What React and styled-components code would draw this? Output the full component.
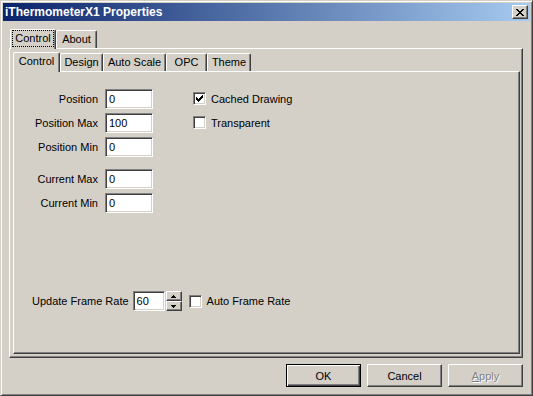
import React from 'react'
import styled, { createGlobalStyle } from 'styled-components'

const GlobalStyle = createGlobalStyle`
  html, body {
    margin: 0;
    padding: 0;
    background: #d4d0c8;
  }
  body {
    font-family: "Liberation Sans", Arial, sans-serif;
    font-size: 11px;
    color: #000;
  }
`;

const Window = styled.div`
  box-sizing: border-box;
  width: 533px;
  height: 396px;
  display: flex;
  flex-direction: column;
  padding: 2px;
  background: #d4d0c8;
  border: 1px solid;
  border-color: #d4d0c8 #404040 #404040 #d4d0c8;
  box-shadow: inset 1px 1px #fff, inset -1px -1px #808080;
`;

const TitleBar = styled.div`
  height: 18px;
  display: flex;
  align-items: center;
  justify-content: space-between;
  padding: 0 2px 0 2px;
  background: linear-gradient(to right, #0a246a, #a6caf0);
`;

const Title = styled.span`
  color: #fff;
  font-weight: bold;
  font-size: 12px;
  font-family: "Liberation Sans", Tahoma, sans-serif;
`;

const CloseButton = styled.div`
  box-sizing: border-box;
  width: 16px;
  height: 14px;
  display: flex;
  align-items: center;
  justify-content: center;
  background: #d4d0c8;
  border: 1px solid;
  border-color: #fff #404040 #404040 #fff;
  box-shadow: inset -1px -1px #808080;
`;

const Body = styled.div`
  flex: 1;
  display: flex;
  flex-direction: column;
  padding: 8px 7px 6px 6px;
`;

const TabRow = styled.div`
  display: flex;
  align-items: flex-end;
  padding-left: ${({ $indent }) => $indent}px;
`;

const Tab = styled.div`
  box-sizing: border-box;
  position: relative;
  width: ${({ $width }) => $width}px;
  height: ${({ $active }) => ($active ? 20 : 18)}px;
  margin-bottom: ${({ $active }) => ($active ? -1 : 0)}px;
  z-index: ${({ $active }) => ($active ? 2 : 1)};
  display: flex;
  align-items: flex-start;
  justify-content: center;
  padding-top: 2px;
  background: #d4d0c8;
  border-left: 1px solid #fff;
  border-top: 1px solid #fff;
  border-right: 1px solid #404040;
  border-radius: 2px 2px 0 0;
  box-shadow: inset -1px 0 #808080;
`;

const FocusLabel = styled.span`
  padding: 1px 2px 2px;
  margin-top: -1px;
  outline: ${({ $focus }) => ($focus ? '1px dotted #000' : 'none')};
`;

const Panel = styled.div`
  box-sizing: border-box;
  flex: 1;
  display: flex;
  flex-direction: column;
  padding: ${({ $pad }) => $pad};
  border: 1px solid;
  border-color: #fff #404040 #404040 #fff;
  box-shadow: inset -1px -1px #808080;
`;

const PageContent = styled.div`
  flex: 1;
  display: flex;
  flex-direction: column;
  padding: 17px 0 42px 0;
`;

const TopSection = styled.div`
  display: flex;
`;

const Groups = styled.div`
  display: flex;
  flex-direction: column;
  gap: 12px;
`;

const FieldGrid = styled.div`
  display: grid;
  grid-template-columns: 84px 48px;
  grid-auto-rows: 20px;
  column-gap: 7px;
  row-gap: 4px;
  align-items: center;
`;

const Label = styled.span`
  text-align: right;
  white-space: nowrap;
`;

const TextBox = styled.div`
  box-sizing: border-box;
  width: ${({ $width }) => $width}px;
  height: 20px;
  display: flex;
  align-items: center;
  padding-left: 3px;
  margin-left: ${({ $gap }) => $gap || 0}px;
  background: #fff;
  color: #000;
  border: 1px solid;
  border-color: #808080 #fff #fff #808080;
  box-shadow: inset 1px 1px #404040, inset -1px -1px #d4d0c8;
`;

const CheckList = styled.div`
  display: flex;
  flex-direction: column;
  gap: 11px;
  margin-left: 40px;
  padding-top: 3px;
`;

const CheckRow = styled.label`
  display: flex;
  align-items: center;
  gap: 5px;
  height: 13px;
  white-space: nowrap;
`;

const Box = styled.span`
  box-sizing: border-box;
  width: 13px;
  height: 13px;
  display: flex;
  align-items: center;
  justify-content: center;
  background: #fff;
  border: 1px solid;
  border-color: #808080 #fff #fff #808080;
  box-shadow: inset 1px 1px #404040, inset -1px -1px #d4d0c8;
`;

const BottomRow = styled.div`
  margin-top: auto;
  display: flex;
  align-items: center;
  padding-left: 18px;
`;

const Spinner = styled.div`
  display: flex;
  flex-direction: column;
  margin: 0 7px 0 1px;
`;

const SpinButton = styled.div`
  box-sizing: border-box;
  width: 16px;
  height: 10px;
  display: flex;
  align-items: center;
  justify-content: center;
  background: #d4d0c8;
  border: 1px solid;
  border-color: #fff #404040 #404040 #fff;
  box-shadow: inset -1px -1px #808080;
`;

const ButtonRow = styled.div`
  display: flex;
  justify-content: flex-end;
  gap: 6px;
  margin-top: 6px;
`;

const Button = styled.div`
  box-sizing: border-box;
  width: 75px;
  height: 23px;
  display: flex;
  align-items: center;
  justify-content: center;
  background: #d4d0c8;
  border: 1px solid;
  border-color: ${({ $default }) => ($default ? '#000' : '#fff #404040 #404040 #fff')};
  box-shadow: ${({ $default }) =>
    $default
      ? 'inset 1px 1px #fff, inset -1px -1px #404040, inset -2px -2px #808080'
      : 'inset -1px -1px #808080'};
  color: ${({ $disabled }) => ($disabled ? '#808080' : '#000')};
  text-shadow: ${({ $disabled }) => ($disabled ? '1px 1px #fff' : 'none')};
`;

const Mnemonic = styled.span`
  text-decoration: underline;
`;

const Check = () => (
  <svg width="7" height="7" viewBox="0 0 7 7">
    <path d="M0 2h1v1h1v1h1V3h1V2h1V1h1V0h1v3H6v1H5v1H4v1H3v1H2V6H1V5H0z" fill="#000" />
  </svg>
);

const Arrow = ({ up }) => (
  <svg width="5" height="3" viewBox="0 0 5 3">
    <path d={up ? 'M2 0h1v1h1v1h1v1H0V2h1V1h1z' : 'M0 0h5v1H4v1H3v1H2V2H1V1H0z'} fill="#000" />
  </svg>
);

const outerTabs = [
  { name: 'Control', width: 46, active: true },
  { name: 'About', width: 41 },
];

const innerTabs = [
  { name: 'Control', width: 47, active: true },
  { name: 'Design', width: 43 },
  { name: 'Auto Scale', width: 63 },
  { name: 'OPC', width: 41 },
  { name: 'Theme', width: 44 },
];

const groups = [
  [['Position', '0'], ['Position Max', '100'], ['Position Min', '0']],
  [['Current Max', '0'], ['Current Min', '0']],
];

function CheckBox({ checked, children }) {
  return (
    <CheckRow>
      <Box>{checked && <Check />}</Box>
      <span>{children}</span>
    </CheckRow>
  );
}

export default function App() {
  return (
    <>
      <GlobalStyle />
      <Window>
        <TitleBar>
          <Title>iThermometerX1 Properties</Title>
          <CloseButton>
            <svg width="8" height="7" viewBox="0 0 8 7">
              <path d="M0 0h2v1h1v1h2V1h1V0h2v1H7v1H6v1H5v1h1v1h1v1h1v1H6V6H5V5H3v1H2v1H0V6h1V5h1V4h1V3H2V2H1V1H0z" fill="#000" />
            </svg>
          </CloseButton>
        </TitleBar>
        <Body>
          <TabRow $indent={1}>
            {outerTabs.map((t) => (
              <Tab key={t.name} $width={t.width} $active={t.active}>
                <FocusLabel $focus={t.active}>{t.name}</FocusLabel>
              </Tab>
            ))}
          </TabRow>
          <Panel $pad="3px 2px 3px 3px">
            <TabRow $indent={0}>
              {innerTabs.map((t) => (
                <Tab key={t.name} $width={t.width} $active={t.active}>
                  <FocusLabel>{t.name}</FocusLabel>
                </Tab>
              ))}
            </TabRow>
            <Panel $pad="0">
              <PageContent>
                <TopSection>
                  <Groups>
                    {groups.map((g, i) => (
                      <FieldGrid key={i}>
                        {g.map(([label, value]) => (
                          <React.Fragment key={label}>
                            <Label>{label}</Label>
                            <TextBox $width={48}>{value}</TextBox>
                          </React.Fragment>
                        ))}
                      </FieldGrid>
                    ))}
                  </Groups>
                  <CheckList>
                    <CheckBox checked>Cached Drawing</CheckBox>
                    <CheckBox>Transparent</CheckBox>
                  </CheckList>
                </TopSection>
                <BottomRow>
                  <Label>Update Frame Rate</Label>
                  <TextBox $width={32} $gap={4}>60</TextBox>
                  <Spinner>
                    <SpinButton><Arrow up /></SpinButton>
                    <SpinButton><Arrow /></SpinButton>
                  </Spinner>
                  <CheckBox>Auto Frame Rate</CheckBox>
                </BottomRow>
              </PageContent>
            </Panel>
          </Panel>
          <ButtonRow>
            <Button $default>OK</Button>
            <Button>Cancel</Button>
            <Button $disabled><span><Mnemonic>A</Mnemonic>pply</span></Button>
          </ButtonRow>
        </Body>
      </Window>
    </>
  );
}
